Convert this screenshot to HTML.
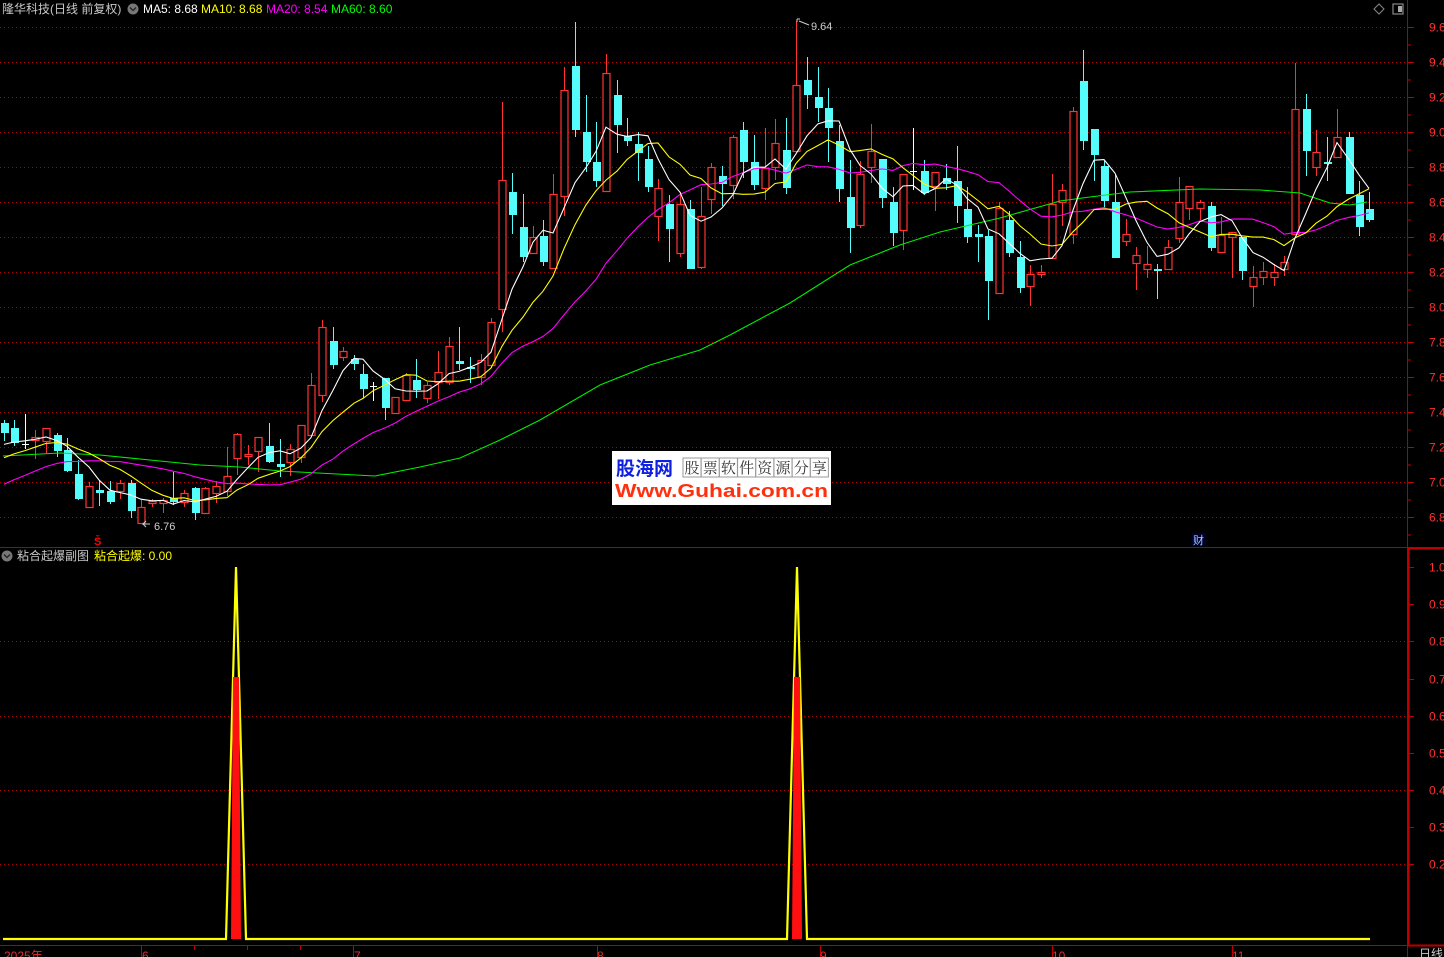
<!DOCTYPE html>
<html><head><meta charset="utf-8"><style>
html,body{margin:0;padding:0;background:#000;width:1444px;height:957px;overflow:hidden;font-family:"Liberation Sans","Noto Sans CJK SC",sans-serif}
svg{position:absolute;left:0;top:0}
</style></head><body>
<svg id="s" width="1444" height="957" xmlns="http://www.w3.org/2000/svg" font-family="Liberation Sans, Noto Sans CJK SC, sans-serif">
<g id="grid"></g>
<g id="cand"></g>
<g id="ma"></g>
<line x1="1407.5" y1="0" x2="1407.5" y2="957" stroke="#b00000" stroke-width="1"/>
<line x1="0" y1="547.5" x2="1444" y2="547.5" stroke="#b00000" stroke-width="1"/>
<rect x="1408.5" y="548.5" width="40" height="397" fill="none" stroke="#c00000" stroke-width="2"/>
<line x1="0" y1="945.5" x2="1444" y2="945.5" stroke="#b00000" stroke-width="1"/>
<g id="ticks"></g>
<text x="2" y="13" font-size="12" fill="#c8c8c8">隆华科技(日线 前复权)</text>
<circle cx="133" cy="9" r="5.5" fill="#777"/><path d="M130 7.5l3 3 3-3" stroke="#222" stroke-width="1.3" fill="none"/>
<text x="143" y="13" font-size="12" fill="#fff">MA5: 8.68</text>
<text x="201" y="13" font-size="12" fill="#ff0">MA10: 8.68</text>
<text x="266" y="13" font-size="12" fill="#f0f">MA20: 8.54</text>
<text x="331" y="13" font-size="12" fill="#0f0">MA60: 8.60</text>
<path d="M1379 4l5 5-5 5-5-5z" fill="none" stroke="#888" stroke-width="1"/>
<rect x="1393" y="4" width="10" height="10" fill="none" stroke="#888" stroke-width="1.2"/><rect x="1398" y="6" width="4" height="6" fill="#aaa"/>
<circle cx="7" cy="556" r="5.5" fill="#777"/><path d="M4 554.5l3 3 3-3" stroke="#222" stroke-width="1.3" fill="none"/>
<text x="17" y="560" font-size="12" fill="#c8c8c8">粘合起爆副图</text>
<text x="94" y="560" font-size="12" fill="#ff0">粘合起爆: 0.00</text>
<text x="94" y="545" font-size="11" font-weight="bold" fill="#f00">Š</text>
<rect x="1192" y="533" width="14" height="13" fill="#003"/>
<text x="1193" y="544" font-size="11" fill="#9cf">财</text>
<path d="M150 524h-7l3-3M143 524l3 3" stroke="#ccc" fill="none"/>
<text x="154" y="530" font-size="11" fill="#ccc">6.76</text>
<path d="M799 21l10 4" stroke="#ccc" fill="none"/><path d="M797 19l3 0M797 19l0 3" stroke="#ccc"/>
<text x="811" y="30" font-size="11" fill="#ccc">9.64</text>
<g id="sub"></g>
<rect x="612" y="451" width="219" height="54" fill="#fff"/>
<text x="616" y="475" font-size="19" font-weight="bold" fill="#1020e0" font-family="Noto Sans CJK SC, sans-serif">股海网</text>
<g id="wm"></g>
<text x="615" y="497" font-size="18" font-weight="bold" fill="#ff3010" textLength="213" lengthAdjust="spacingAndGlyphs">Www.Guhai.com.cn</text>
<g font-size="12" fill="#e03030">
<text x="4" y="960">2025年</text><text x="142" y="960">6</text><text x="354" y="960">7</text><text x="597" y="960">8</text><text x="820" y="960">9</text><text x="1052" y="960">10</text><text x="1232" y="960">11</text>
</g>
<text x="1419" y="958" font-size="12" fill="#ccc">日线</text>
</svg>
<script>
var NS="http://www.w3.org/2000/svg";
function el(p,t,a,txt){var e=document.createElementNS(NS,t);for(var k in a)e.setAttribute(k,a[k]);if(txt)e.textContent=txt;document.getElementById(p).appendChild(e);return e;}
for(var k=0;k<=14;k++){var y=27+k*35+0.5;el("grid","line",{x1:0,y1:y,x2:1406,y2:y,stroke:"#b00000","stroke-dasharray":"1,3"});
el("grid","line",{x1:1407,y1:y,x2:1414,y2:y,stroke:"#c00000"});
el("grid","line",{x1:1407,y1:y+17.5,x2:1411,y2:y+17.5,stroke:"#c00000"});
var v=(9.6-k*0.2).toFixed(1);el("grid","text",{x:1429,y:y+4,"font-size":12,fill:"#ff3030"},v);}
var subs=[[1.0,567],[0.9,604],[0.8,641],[0.7,679],[0.6,716],[0.5,753],[0.4,790],[0.3,827],[0.2,864]];
subs.forEach(function(s){var y=s[1]+0.5;if([0.8,0.6,0.4,0.2].indexOf(s[0])>=0)el("grid","line",{x1:0,y1:y,x2:1406,y2:y,stroke:"#b00000","stroke-dasharray":"1,3"});
el("grid","line",{x1:1409,y1:y,x2:1414,y2:y,stroke:"#c00000"});el("grid","text",{x:1429,y:y+4,"font-size":12,fill:"#ff3030"},s[0].toFixed(1));});
[141,353,597,820,1052,1232].forEach(function(x){el("ticks","line",{x1:x+.5,y1:946,x2:x+.5,y2:957,stroke:"#c00000"});});
[194,247,300].forEach(function(x){el("ticks","line",{x1:x+.5,y1:946,x2:x+.5,y2:950,stroke:"#c00000"});});
var C=[[4,423,433,420,441,'c'],[14,428,443,420,446,'c'],[25,444,444,414,449,'w'],[35,437,440,430,459,'r'],[46,428,441,428,453,'r'],[57,435,451,433,457,'c'],[67,450,471,438,472,'c'],[78,474,499,460,500,'c'],[89,486,507,482,507,'r'],[99,490,493,480,506,'c'],[110,491,502,481,504,'c'],[120,483,491,480,499,'r'],[131,483,511,480,518,'c'],[141,507,523,500,524,'r'],[152,501,503,499,507,'r'],[163,500,503,498,513,'r'],[173,498,502,472,505,'c'],[184,493,502,490,507,'r'],[195,488,513,487,520,'c'],[205,488,513,487,513,'r'],[216,486,493,481,503,'r'],[227,476,491,447,496,'r'],[237,434,458,433,475,'r'],[248,454,456,445,465,'r'],[258,437,451,437,472,'r'],[269,446,462,423,463,'c'],[280,464,467,439,477,'c'],[290,449,462,444,476,'r'],[301,425,457,425,463,'r'],[311,385,435,373,434,'r'],[322,327,395,320,402,'r'],[333,341,365,327,369,'c'],[343,351,357,347,361,'r'],[354,359,364,355,370,'c'],[363,374,389,364,398,'c'],[373,386,386,382,401,'w'],[385,378,408,378,420,'c'],[395,397,413,397,413,'r'],[406,375,400,373,400,'r'],[416,380,390,359,398,'c'],[427,385,398,382,403,'r'],[438,372,382,351,399,'r'],[449,346,382,337,385,'r'],[459,361,364,327,370,'c'],[470,367,369,357,383,'c'],[481,360,377,354,385,'r'],[491,322,365,318,368,'r'],[502,180,309,102,332,'r'],[512,192,215,173,234,'c'],[523,227,257,194,262,'c'],[533,237,253,226,253,'r'],[543,236,262,220,266,'c'],[553,194,268,174,268,'r'],[564,90,196,67,216,'r'],[575,66,130,22,137,'c'],[586,132,162,95,172,'c'],[596,162,181,122,187,'c'],[606,73,191,54,192,'r'],[617,95,125,80,153,'c'],[627,136,141,118,146,'c'],[638,144,153,132,181,'c'],[648,159,187,146,192,'c'],[658,188,216,179,241,'r'],[669,204,229,195,262,'c'],[680,204,253,192,257,'r'],[690,209,269,200,269,'c'],[701,216,267,187,269,'r'],[711,167,199,163,214,'r'],[722,176,184,166,206,'c'],[733,137,185,135,199,'r'],[743,130,162,122,178,'c'],[754,162,185,135,190,'c'],[765,168,188,128,200,'r'],[775,143,167,119,180,'r'],[786,150,188,118,194,'c'],[796,85,151,21,151,'r'],[807,80,95,57,109,'c'],[818,97,108,67,122,'c'],[828,108,128,88,162,'c'],[839,141,189,125,202,'c'],[850,197,228,160,253,'c'],[860,174,225,161,228,'r'],[871,151,167,124,183,'r'],[882,159,198,159,208,'c'],[893,202,233,187,246,'c'],[903,174,230,174,250,'r'],[913,171,171,128,190,'w'],[924,171,193,160,195,'c'],[935,172,186,172,211,'r'],[946,178,184,164,190,'c'],[957,181,206,146,223,'c'],[967,209,237,187,243,'c'],[978,234,237,225,262,'c'],[988,236,281,230,320,'c'],[999,208,293,202,294,'r'],[1009,220,253,211,257,'c'],[1020,257,288,241,293,'c'],[1030,274,286,265,306,'r'],[1041,272,274,265,278,'r'],[1052,204,258,174,258,'r'],[1062,190,202,184,226,'r'],[1073,111,234,107,244,'r'],[1083,81,141,50,150,'c'],[1094,129,155,129,181,'c'],[1104,166,201,161,208,'c'],[1115,202,258,174,258,'c'],[1126,234,241,219,246,'r'],[1136,255,263,247,290,'r'],[1147,264,269,246,278,'r'],[1157,269,271,264,299,'c'],[1168,247,269,240,269,'r'],[1179,202,238,177,243,'r'],[1189,186,208,186,220,'r'],[1200,202,208,200,220,'r'],[1211,206,248,202,251,'c'],[1221,235,252,217,252,'r'],[1232,232,237,232,278,'r'],[1242,237,271,237,280,'c'],[1253,277,286,266,307,'r'],[1263,271,277,262,285,'r'],[1274,272,277,264,286,'r'],[1284,262,269,256,276,'r'],[1295,109,234,63,234,'r'],[1306,109,151,94,176,'c'],[1316,152,167,130,176,'r'],[1327,162,164,137,181,'c'],[1337,137,157,109,157,'r'],[1349,137,194,132,194,'c'],[1359,195,227,181,236,'c'],[1369,209,220,192,222,'c']];
var closes=[];
C.forEach(function(c){var x=c[0],t=c[1],b=c[2];
 if(c[5]=='r'){el("cand","line",{x1:x+.5,y1:c[3],x2:x+.5,y2:t,stroke:"#ff3232"});el("cand","line",{x1:x+.5,y1:b,x2:x+.5,y2:c[4],stroke:"#ff3232"});
  el("cand","rect",{x:x-3,y:t+.5,width:7,height:Math.max(b-t,1),fill:"#000",stroke:"#ff3232","stroke-width":1.2});closes.push(t);}
 else if(c[5]=='c'){el("cand","line",{x1:x+.5,y1:c[3],x2:x+.5,y2:c[4],stroke:"#54fcfc"});
  el("cand","rect",{x:x-3,y:t,width:8,height:Math.max(b-t,2),fill:"#54fcfc"});closes.push(b);}
 else{el("cand","line",{x1:x+.5,y1:c[3],x2:x+.5,y2:c[4],stroke:"#fff"});el("cand","line",{x1:x-3,y1:t+.5,x2:x+4,y2:t+.5,stroke:"#fff"});closes.push(t);}
});
var pre=[];for(var i=0;i<20;i++)pre.push(540-i*5.3);
var all=pre.concat(closes);
function ma(n,col){var pts=[];for(var i=0;i<C.length;i++){var s=0;for(var j=0;j<n;j++)s+=all[20+i-j];pts.push(C[i][0]+","+(s/n).toFixed(1));}
 el("ma","polyline",{points:pts.join(" "),fill:"none",stroke:col,"stroke-width":1.1});}
el("ma","polyline",{points:"3,456 60,453 100,455 150,460 200,465 240,467 280,471 375,476 420,467 460,458 500,440 540,420 600,385 650,365 700,350 730,335 790,303 850,265 900,245 940,232 1000,218 1060,201 1090,197 1130,192 1200,189 1260,190 1300,193 1330,203 1350,205 1367,202",fill:"none",stroke:"#00ee00","stroke-width":1.1});
ma(20,"#ff00ff");ma(10,"#ffff00");ma(5,"#ffffff");
el("sub","polyline",{points:"3,939 226,939 236,567 246,939 787,939 797,567 807,939 1370,939",fill:"none",stroke:"#ffff00","stroke-width":2.2});
[236,797].forEach(function(x){el("sub","polygon",{points:(x-5)+",939 "+(x-3)+",677 "+(x+3)+",677 "+(x+5)+",939",fill:"#ff1010"});});
var ch="股票软件资源分享";for(var i=0;i<8;i++){var bx=683+i*18.2;el("wm","rect",{x:bx,y:458,width:18,height:19,fill:"#fff",stroke:"#999","stroke-width":1});
el("wm","text",{x:bx+1.5,y:473,"font-size":15,fill:"#333","font-family":"Noto Serif CJK SC, serif"},ch[i]);}
</script>
</body></html>
